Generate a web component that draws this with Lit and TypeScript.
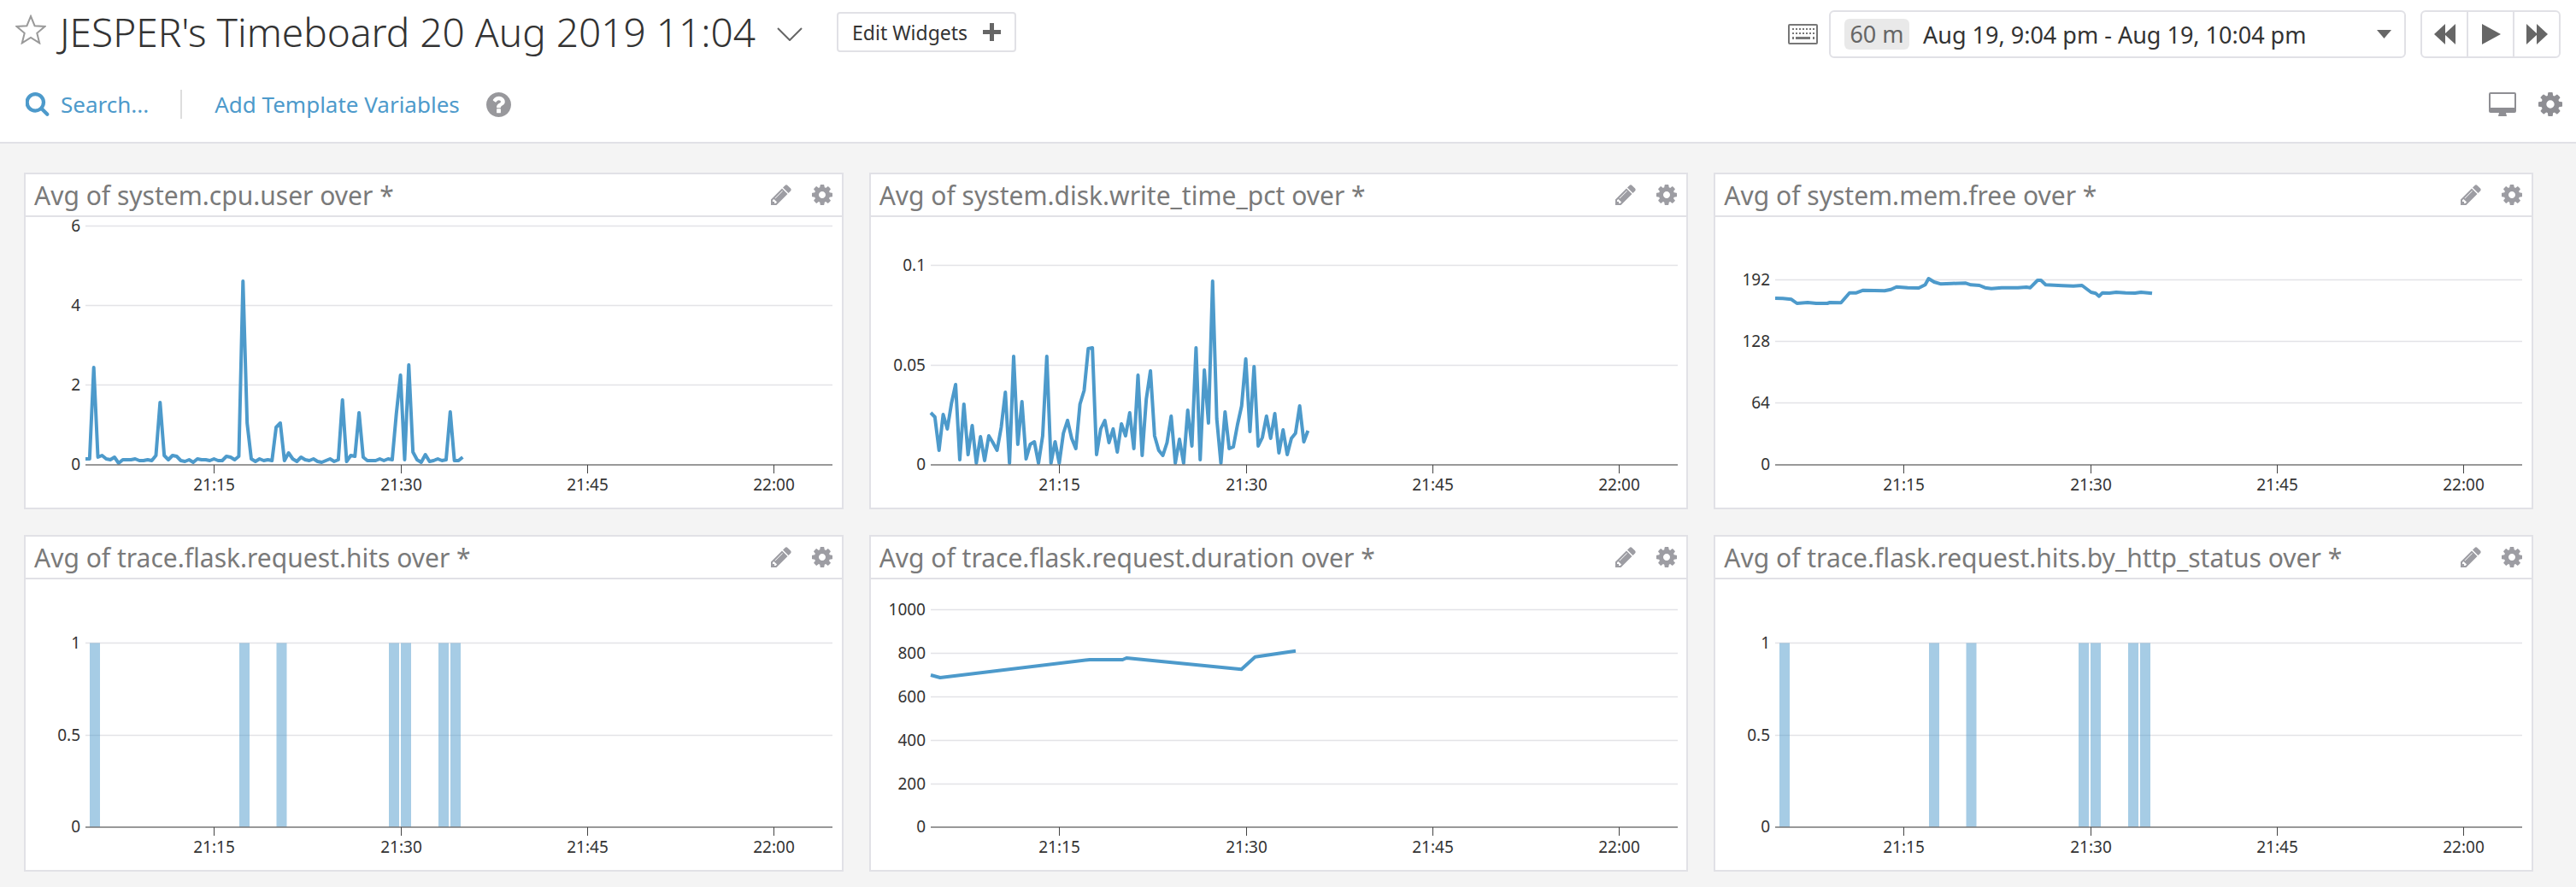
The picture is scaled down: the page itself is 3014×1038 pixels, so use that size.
import { LitElement, html, css, svg, nothing } from "lit";
import { customElement, property } from "lit/decorators.js";

const COG = "M1024 896q0-106-75-181t-181-75-181 75-75 181 75 181 181 75 181-75 75-181zm512-109v222q0 12-8 23t-20 13l-185 28q-19 54-39 91 35 50 107 138 10 12 10 25t-9 23q-27 37-99 108t-94 71q-12 0-26-9l-138-108q-44 23-91 38-16 136-29 186-7 28-36 28h-222q-14 0-24.5-8.5t-11.5-21.5l-28-184q-49-16-90-37l-141 107q-10 9-25 9-14 0-25-11-126-114-165-168-7-10-7-23 0-12 8-23 15-21 51-66.5t54-70.5q-27-50-41-99l-183-27q-13-2-21-12.5t-8-23.5v-222q0-12 8-23t19-13l186-28q14-46 39-92-40-57-107-138-10-12-10-24 0-10 9-23 26-36 98.5-107.5t94.5-71.5q13 0 26 10l138 107q44-23 91-38 16-136 29-186 7-28 36-28h222q14 0 24.5 8.5t11.5 21.5l28 184q49 16 90 37l142-107q9-9 24-9 13 0 25 10 129 119 165 170 7 8 7 22 0 12-8 23-15 21-51 66.5t-54 70.5q26 50 41 98l183 28q13 2 21 12.5t8 23.5z";
const PENCIL = "M491 1536l91-91-235-235-91 91v107h128v128h107zm523-928q0-22-22-22-10 0-17 7l-542 542q-7 7-7 17 0 22 22 22 10 0 17-7l542-542q7-7 7-17zm-54-192l416 416-832 832h-416v-416zm683 96q0 53-37 90l-166 166-416-416 166-165q36-38 90-38 53 0 91 38l235 234q37 39 37 91z";
const SEARCH = "M1216 832q0-185-131.5-316.5t-316.5-131.5-316.5 131.5-131.5 316.5 131.5 316.5 316.5 131.5 316.5-131.5 131.5-316.5zm512 832q0 52-38 90t-90 38q-54 0-90-38l-343-342q-179 124-399 124-143 0-273.5-55.5t-225-150-150-225-55.5-273.5 55.5-273.5 150-225 225-150 273.5-55.5 273.5 55.5 225 150 150 225 55.5 273.5q0 220-124 399l343 343q37 37 37 90z";
const HELP = "M1024 1376v-192q0-14-9-23t-23-9h-192q-14 0-23 9t-9 23v192q0 14 9 23t23 9h192q14 0 23-9t9-23zm256-672q0-88-55.5-163t-138.5-116-170-41q-243 0-371 213-15 24 8 42l132 100q7 6 19 6 16 0 25-12 53-68 86-92 34-24 86-24 48 0 85.5 26t37.5 59q0 38-20 61t-68 45q-63 28-115.5 86.5t-52.5 125.5v36q0 14 9 23t23 9h192q14 0 23-9t9-23q0-19 21.5-49.5t54.5-49.5q32-18 49-28.5t46-35 44.5-48 28-60.5 12.5-81zm384 192q0 209-103 385.5t-279.5 279.5-385.5 103-385.5-103-279.5-279.5-103-385.5 103-385.5 279.5-279.5 385.5-103 385.5 103 279.5 279.5 103 385.5z";

// all charts share the same x axis, in px inside the card
const PLOT_LEFT = 70;
const PLOT_RIGHT = 944;
const BASELINE = 290;
const TICKS = [
  { x: 220.5, label: "21:15" },
  { x: 439.5, label: "21:30" },
  { x: 657.5, label: "21:45" },
  { x: 875.5, label: "22:00" },
];
const SAMPLE_STEP = 4.85;

const stepped = (heights: number[]) =>
  heights.map((h, i) => [PLOT_LEFT + i * SAMPLE_STEP, BASELINE - h]);

const CPU = stepped([
  7, 7, 114, 9, 11, 7, 6, 9, 2, 6, 6, 6, 7, 5, 5, 6, 5, 11, 73, 11, 6, 11, 10, 5, 4, 6, 3, 7, 6, 6, 5, 7, 5, 5, 10, 9,
  6, 10, 215, 49, 7, 4, 7, 5, 6, 5, 44, 49, 5, 14, 7, 4, 9, 6, 5, 7, 4, 3, 5, 7, 4, 6, 76, 4, 11, 10, 61, 9, 5, 5, 5,
  7, 5, 7, 6, 60, 105, 6, 117, 15, 6, 3, 12, 4, 5, 7, 5, 6, 62, 5, 5, 9,
]);

const DISK = stepped([
  61, 56, 17, 59, 42, 72, 94, 6, 71, 12, 46, 2, 33, 5, 34, 26, 17, 44, 85, 2, 127, 24, 74, 7, 24, 27, 2, 34, 127, 2,
  27, 2, 37, 52, 31, 19, 71, 87, 136, 137, 12, 42, 52, 26, 42, 15, 48, 34, 61, 19, 105, 11, 77, 110, 34, 17, 11, 26,
  57, 2, 30, 2, 64, 22, 137, 6, 111, 49, 215, 54, 2, 62, 19, 21, 47, 69, 124, 39, 115, 22, 32, 57, 31, 60, 14, 41, 12,
  31, 37, 69, 27, 40,
]);

const MEM = [
  [70, 95], [79, 95.3], [89, 96.3], [95.5, 101], [108, 100], [118, 101], [131, 101], [134, 100], [147, 100.3],
  [157, 88.7], [165, 88.7], [173, 85.7], [186, 86], [198, 86.3], [205.5, 84.7], [212, 81.7], [225, 82.7], [238, 83],
  [245.5, 79.3], [249.5, 72], [256, 76], [264, 78.3], [277, 77.7], [293, 77.3], [299, 79.3], [309, 80], [315.5, 82.7],
  [323, 83.7], [335, 82.7], [354, 82.7], [364, 82], [368.5, 82.7], [377, 74], [381, 74], [386.5, 79.3], [406, 80.3],
  [419, 80.7], [429, 80], [439.6, 88], [445, 89.3], [449, 92.7], [453, 88.7], [461, 89], [469, 88], [480, 88.7],
  [491, 89], [498, 88], [506, 88.7], [511, 89.3],
];

const DURATION = [
  [70, 112], [81, 115], [256, 94], [294.5, 94], [299, 92], [433.5, 105.3], [449.5, 90.7], [497, 83.7],
];

const HIT_BARS = [75, 250, 293.5, 425, 439, 483, 497];

type Grid = { y: number; label: string };

interface Widget {
  title: string;
  grid: Grid[];
  line?: number[][];
  bars?: number[];
}

const HITS_GRID: Grid[] = [
  { y: 74.5, label: "1" },
  { y: 182.5, label: "0.5" },
];

const WIDGETS: Widget[] = [
  {
    title: "Avg of system.cpu.user over *",
    grid: [
      { y: 10.5, label: "6" },
      { y: 103.5, label: "4" },
      { y: 196.5, label: "2" },
    ],
    line: CPU,
  },
  {
    title: "Avg of system.disk.write_time_pct over *",
    grid: [
      { y: 56.5, label: "0.1" },
      { y: 173.5, label: "0.05" },
    ],
    line: DISK,
  },
  {
    title: "Avg of system.mem.free over *",
    grid: [
      { y: 73.5, label: "192" },
      { y: 145.5, label: "128" },
      { y: 217.5, label: "64" },
    ],
    line: MEM,
  },
  { title: "Avg of trace.flask.request.hits over *", grid: HITS_GRID, bars: HIT_BARS },
  {
    title: "Avg of trace.flask.request.duration over *",
    grid: [
      { y: 35.5, label: "1000" },
      { y: 86.5, label: "800" },
      { y: 137.5, label: "600" },
      { y: 188.5, label: "400" },
      { y: 239.5, label: "200" },
    ],
    line: DURATION,
  },
  { title: "Avg of trace.flask.request.hits.by_http_status over *", grid: HITS_GRID, bars: HIT_BARS },
];

@customElement("ts-widget")
export class TsWidget extends LitElement {
  @property({ attribute: false }) widget!: Widget;

  static styles = css`
    :host {
      display: block;
      height: 394px;
      box-sizing: border-box;
      background: #fff;
      border: 2px solid #e1e1e6;
    }
    .head {
      height: 50px;
      box-sizing: border-box;
      border-bottom: 2px solid #e1e1e6;
      display: flex;
      align-items: center;
      padding: 0 11px 0 10px;
    }
    .title {
      flex: 1;
      font-size: 30px;
      color: #7a7a7a;
      white-space: nowrap;
    }
    .head svg {
      width: 24px;
      height: 24px;
      fill: #9d9da3;
      margin-left: 24px;
      display: block;
    }
    .plot {
      display: block;
      width: 100%;
      height: 340px;
      overflow: visible;
    }
    .plot text {
      font-size: 19px;
      fill: #333;
    }
    .grid {
      stroke: #e3e3e7;
      stroke-width: 1.5;
    }
    .axis {
      stroke: #777;
      stroke-width: 1.5;
    }
    .tick {
      stroke: #444;
      stroke-width: 1;
    }
    .line {
      fill: none;
      stroke: #4d9acb;
      stroke-width: 4;
      stroke-linejoin: round;
    }
    .bar {
      fill: #4d9acb;
      fill-opacity: 0.5;
    }
  `;

  render() {
    const { title, grid, line, bars } = this.widget;
    return html`
      <div class="head">
        <span class="title">${title}</span>
        <svg viewBox="128 128 1536 1536"><path d=${PENCIL}></path></svg>
        <svg viewBox="0 128 1536 1536"><path d=${COG}></path></svg>
      </div>
      <svg class="plot">
        ${grid.map(
          (g) => svg`
            <line class="grid" x1=${PLOT_LEFT} x2=${PLOT_RIGHT} y1=${g.y} y2=${g.y}></line>
            <text x="64" y=${g.y + 6.5} text-anchor="end">${g.label}</text>
          `
        )}
        <text x="64" y=${BASELINE + 6} text-anchor="end">0</text>
        ${bars
          ? bars.map((x) => svg`<rect class="bar" x=${x} y="74.5" width="12" height=${BASELINE - 74.5}></rect>`)
          : nothing}
        ${line ? svg`<polyline class="line" points=${line.map((p) => p.join(",")).join(" ")}></polyline>` : nothing}
        <line class="axis" x1=${PLOT_LEFT} x2=${PLOT_RIGHT} y1=${BASELINE} y2=${BASELINE}></line>
        ${TICKS.map(
          (t) => svg`
            <line class="tick" x1=${t.x} x2=${t.x} y1=${BASELINE} y2=${BASELINE + 10}></line>
            <text x=${t.x} y="320" text-anchor="middle">${t.label}</text>
          `
        )}
      </svg>
    `;
  }
}

@customElement("app-root")
export class AppRoot extends LitElement {
  static styles = css`
    :host {
      display: block;
      min-height: 1038px;
      background: #f4f4f4;
      font-family: "Noto Sans", "Open Sans", sans-serif;
    }
    .top {
      background: #fff;
      height: 168px;
      box-sizing: border-box;
      border-bottom: 2px solid #e1e1e6;
      padding: 12px 18px 0 18px;
    }
    .row {
      display: flex;
      align-items: center;
      height: 56px;
    }
    .row + .row {
      margin-top: 26px;
    }
    .star {
      width: 36px;
      height: 35px;
      margin: 0 16px 11px 0;
      fill: none;
      stroke: #9a9a9a;
      stroke-width: 2;
    }
    .name {
      font-size: 46px;
      font-weight: 300;
      color: #333;
      white-space: nowrap;
      margin-bottom: 6px;
    }
    .chevron {
      width: 30px;
      height: 16px;
      margin-left: 25px;
      fill: none;
      stroke: #666;
      stroke-width: 2;
    }
    .edit {
      margin: -5px 0 0 40px;
      height: 47px;
      width: 210px;
      box-sizing: border-box;
      border: 2px solid #e1e1e6;
      border-radius: 4px;
      display: flex;
      align-items: center;
      padding: 0 16px;
      font-size: 23px;
      color: #333;
      white-space: nowrap;
    }
    .edit svg {
      width: 21px;
      height: 21px;
      margin-left: auto;
      fill: #666;
    }
    .spacer {
      flex: 1;
    }
    .keyboard {
      width: 35px;
      height: 24px;
      margin-right: 13px;
      fill: #777;
    }
    .range {
      width: 675px;
      height: 56px;
      box-sizing: border-box;
      border: 2px solid #e1e1e6;
      border-radius: 6px;
      display: flex;
      align-items: center;
      padding: 0 15px 0 16px;
      color: #333;
      font-size: 27px;
      white-space: nowrap;
    }
    .badge {
      width: 76px;
      height: 36px;
      line-height: 36px;
      text-align: center;
      background: #e9e9e9;
      border-radius: 6px;
      color: #666;
      margin-right: 16px;
    }
    .caret {
      width: 17px;
      height: 10px;
      margin-left: auto;
      fill: #666;
    }
    .nav {
      width: 164px;
      height: 56px;
      box-sizing: border-box;
      margin-left: 17px;
      border: 2px solid #e1e1e6;
      border-radius: 6px;
      display: flex;
    }
    .nav div {
      flex: 1;
      display: flex;
      align-items: center;
      justify-content: center;
    }
    .nav div + div {
      border-left: 2px solid #e1e1e6;
    }
    .nav svg {
      height: 24px;
      width: 25px;
      fill: #666;
    }
    .search {
      width: 28px;
      height: 28px;
      margin-left: 12px;
      fill: #4d9acb;
    }
    .link {
      font-size: 26px;
      color: #4d9acb;
      white-space: nowrap;
    }
    .search-label {
      margin-left: 13px;
    }
    .divider {
      width: 2px;
      height: 34px;
      background: #ddd;
      margin: 0 38px 0 37px;
    }
    .help {
      width: 29px;
      height: 29px;
      margin-left: 31px;
      fill: #98989c;
    }
    .monitor {
      width: 32px;
      height: 28px;
      fill: #8e8e93;
      margin-right: 26px;
    }
    .cog {
      width: 28px;
      height: 28px;
      fill: #8e8e93;
      margin-right: -2px;
    }
    .widgets {
      display: grid;
      grid-template-columns: repeat(3, 1fr);
      gap: 30px;
      padding: 34px 50px 0 28px;
    }
  `;

  render() {
    return html`
      <div class="top">
        <div class="row">
          <svg class="star" viewBox="0 0 36 35">
            <polygon points="18,2 22.6,13.2 34.4,14 25.3,21.8 28.2,33.4 18,27 7.8,33.4 10.7,21.8 1.6,14 13.4,13.2"></polygon>
          </svg>
          <span class="name">JESPER's Timeboard 20 Aug 2019 11:04</span>
          <svg class="chevron" viewBox="0 0 30 16"><polyline points="1,1 15,15 29,1"></polyline></svg>
          <div class="edit">
            Edit Widgets
            <svg viewBox="0 0 21 21"><path d="M8 0h5v8h8v5h-8v8H8v-8H0V8h8z"></path></svg>
          </div>
          <span class="spacer"></span>
          <svg class="keyboard" viewBox="0 0 35 24">
            <path fill-rule="evenodd" d="M2 0h31a2 2 0 0 1 2 2v20a2 2 0 0 1-2 2H2a2 2 0 0 1-2-2V2a2 2 0 0 1 2-2zm0 2v20h31V2z"></path>
            <path d="M5 5h2v2H5zM9 5h2v2H9zM13 5h2v2h-2zM17 5h2v2h-2zM21 5h2v2h-2zM25 5h2v2h-2zM29 5h2v2h-2zM5 10h2v2H5zM9 10h2v2H9zM13 10h2v2h-2zM17 10h2v2h-2zM21 10h2v2h-2zM25 10h2v2h-2zM29 10h2v2h-2zM5 15h2v3H5zM9 15h17v3H9zM29 15h2v3h-2z"></path>
          </svg>
          <div class="range">
            <span class="badge">60 m</span>
            <span>Aug 19, 9:04 pm - Aug 19, 10:04 pm</span>
            <svg class="caret" viewBox="0 0 17 10"><polygon points="0,0 17,0 8.5,10"></polygon></svg>
          </div>
          <div class="nav">
            <div><svg viewBox="0 0 25 24"><polygon points="13,0 13,24 0,12"></polygon><polygon points="25,0 25,24 12,12"></polygon></svg></div>
            <div><svg viewBox="0 0 25 24"><polygon points="2,0 24,12 2,24"></polygon></svg></div>
            <div><svg viewBox="0 0 25 24"><polygon points="0,0 13,12 0,24"></polygon><polygon points="12,0 25,12 12,24"></polygon></svg></div>
          </div>
        </div>
        <div class="row">
          <svg class="search" viewBox="128 128 1600 1664"><path d=${SEARCH}></path></svg>
          <span class="link search-label">Search...</span>
          <span class="divider"></span>
          <span class="link">Add Template Variables</span>
          <svg class="help" viewBox="128 128 1536 1536"><path d=${HELP}></path></svg>
          <span class="spacer"></span>
          <svg class="monitor" viewBox="0 0 32 28">
            <path fill-rule="evenodd" d="M2 0h28a2 2 0 0 1 2 2v20a2 2 0 0 1-2 2H20l1 4H11l1-4H2a2 2 0 0 1-2-2V2a2 2 0 0 1 2-2zm0 2v16h28V2z"></path>
          </svg>
          <svg class="cog" viewBox="0 128 1536 1536"><path d=${COG}></path></svg>
        </div>
      </div>
      <div class="widgets">
        ${WIDGETS.map((w) => html`<ts-widget .widget=${w}></ts-widget>`)}
      </div>
    `;
  }
}
